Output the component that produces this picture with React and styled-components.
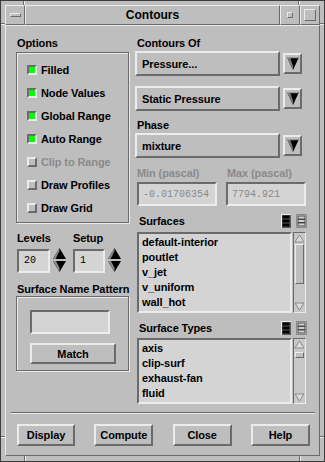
import React from 'react';
import styled, { createGlobalStyle } from 'styled-components';

const C = {
  bg: '#bebebe',
  light: '#ececec',
  dark: '#6b6b6b',
  field: '#d4d4d4',
  grey: '#8a8a8a',
};

const raised = (w = 1) =>
  `border:${w}px solid; border-color:${C.light} ${C.dark} ${C.dark} ${C.light};`;
const sunken = (w = 1) =>
  `border:${w}px solid; border-color:${C.dark} ${C.light} ${C.light} ${C.dark};`;

const Global = createGlobalStyle`
  html, body { margin: 0; padding: 0; background: ${C.bg}; }
  body { font-family: "Liberation Sans", Arial, Helvetica, sans-serif; }
  * { box-sizing: border-box; }
`;

const Window = styled.div`
  position: relative;
  width: 325px;
  height: 462px;
  background: ${C.bg};
  border: 1px solid #3c3c3c;
  padding: 4px 4px 5px 4px;
  display: flex;
  flex-direction: column;
  font-family: "Liberation Sans", Arial, Helvetica, sans-serif;
  font-weight: bold;
  font-size: 11px;
  color: #000;
  letter-spacing: -0.1px;
`;

const Tick = styled.span`
  position: absolute;
  left: ${(p) => p.$x}px;
  top: ${(p) => p.$y}px;
  width: ${(p) => p.$w}px;
  height: ${(p) => p.$h}px;
  background: ${C.light};
  box-shadow: ${(p) => (p.$w === 1 ? `-1px 0 0 ${C.dark}` : `0 -1px 0 ${C.dark}`)};
`;

const TitleBar = styled.div`
  display: flex;
  height: 20px;
  flex: none;
`;

const TitleCell = styled.div`
  ${raised(1)}
  width: ${(p) => (p.$w ? `${p.$w}px` : 'auto')};
  flex: ${(p) => (p.$w ? 'none' : '1')};
  display: flex;
  align-items: center;
  justify-content: center;
`;

const TitleText = styled.span`
  font-size: 12px;
  font-weight: bold;
  letter-spacing: 0;
`;

const MenuBar = styled.span`
  width: 11px;
  height: 4px;
  ${raised(1)}
  background: ${C.bg};
`;

const MinBox = styled.span`
  width: 6px;
  height: 6px;
  ${raised(1)}
  background: ${C.bg};
`;

const MaxBox = styled.span`
  width: 12px;
  height: 12px;
  ${raised(1)}
  background: ${C.bg};
`;

const Body = styled.div`
  flex: 1;
  ${raised(1)}
  display: flex;
  flex-direction: column;
  padding-top: 10px;
`;

const Columns = styled.div`
  display: flex;
  gap: 6px;
  padding-left: 10px;
`;

const LeftCol = styled.div`
  width: 113px;
  display: flex;
  flex-direction: column;
`;

const RightCol = styled.div`
  width: 171px;
  display: flex;
  flex-direction: column;
`;

const Label = styled.div`
  height: 14px;
  line-height: 14px;
  white-space: nowrap;
  margin-top: ${(p) => p.$mt || 0}px;
  padding-left: ${(p) => (p.$pl === undefined ? 1 : p.$pl)}px;
  color: ${(p) => (p.$disabled ? C.grey : '#000')};
`;

const GroupBox = styled.div`
  border: 1px solid ${C.dark};
  box-shadow: inset 1px 1px 0 ${C.light}, 1px 1px 0 ${C.light};
  margin-top: ${(p) => p.$mt || 0}px;
  height: ${(p) => p.$h}px;
  width: 113px;
  display: flex;
  flex-direction: column;
`;

const OptionsBox = styled(GroupBox)`
  padding: 5px 0 3px 10px;
`;

const CheckRow = styled.div`
  height: 23px;
  display: flex;
  align-items: center;
  gap: 4px;
`;

const Indicator = styled.span`
  width: 10px;
  height: 10px;
  flex: none;
  ${(p) => (p.$on ? sunken(2) : raised(2))}
  background: ${(p) => (p.$on ? '#00ff00' : C.bg)};
`;

const CheckText = styled.span`
  color: ${(p) => (p.$disabled ? C.grey : '#000')};
  white-space: nowrap;
`;

const SpinRow = styled.div`
  display: flex;
  gap: 7px;
  margin-top: 8px;
`;

const SpinGroup = styled.div`
  display: flex;
  flex-direction: column;
  margin-left: ${(p) => p.$ml || 0}px;
`;

const SpinLine = styled.div`
  display: flex;
  align-items: center;
  gap: 3px;
  margin-top: 3px;
`;

const Field = styled.div`
  ${sunken(2)}
  background: ${C.field};
  width: ${(p) => p.$w}px;
  height: 24px;
  display: flex;
  align-items: center;
  padding-left: ${(p) => p.$pl || 4}px;
  font-family: "Liberation Mono", "Courier New", monospace;
  font-weight: normal;
  font-size: 10px;
  letter-spacing: 0;
  color: ${(p) => (p.$disabled ? C.grey : '#000')};
`;

const PatternBox = styled(GroupBox)`
  padding: 13px 0 0 13px;
  gap: 9px;
`;

const PushButton = styled.button`
  ${raised(2)}
  background: ${C.bg};
  width: ${(p) => p.$w}px;
  height: ${(p) => p.$h}px;
  padding: 0;
  font-family: inherit;
  font-weight: bold;
  font-size: 11px;
  color: #000;
  letter-spacing: -0.1px;
`;

const DropRow = styled.div`
  display: flex;
  align-items: center;
  gap: 3px;
  margin-top: ${(p) => p.$mt || 0}px;
`;

const Dropdown = styled.div`
  ${raised(2)}
  width: 145px;
  height: 25px;
  display: flex;
  align-items: center;
  padding-left: 5px;
`;

const ArrowButton = styled.div`
  ${raised(2)}
  width: 19px;
  height: 21px;
  display: flex;
  align-items: center;
  justify-content: center;
`;

const MinMaxRow = styled.div`
  display: flex;
  gap: 9px;
  margin-left: 2px;
  margin-top: ${(p) => p.$mt || 0}px;
`;

const MinMaxCell = styled.div`
  width: 80px;
`;

const ListHeader = styled.div`
  display: flex;
  align-items: center;
  height: 14px;
  margin-top: ${(p) => p.$mt}px;
  padding-left: 4px;
`;

const HeaderLabel = styled.span`
  flex: 1;
`;

const HeaderIcons = styled.span`
  display: flex;
  gap: 5px;
  margin-right: -1px;
`;

const ListWrap = styled.div`
  display: flex;
  margin-left: 2px;
  margin-top: ${(p) => p.$mt}px;
  height: ${(p) => p.$h}px;
`;

const ListBox = styled.div`
  ${sunken(2)}
  background: ${C.field};
  width: 156px;
  padding: ${(p) => p.$pt}px 0 0 3px;
  overflow: hidden;
`;

const ListItem = styled.div`
  height: 15px;
  line-height: 15px;
  white-space: nowrap;
`;

const ScrollBar = styled.div`
  ${sunken(1)}
  background: #c8c8c8;
  width: 13px;
  margin-left: 1px;
  display: flex;
  flex-direction: column;
  align-items: center;
  padding: 1px 0;
`;

const Track = styled.div`
  flex: 1;
  width: 11px;
  display: flex;
  flex-direction: column;
  align-items: center;
`;

const Thumb = styled.div`
  ${raised(1)}
  background: ${C.bg};
  width: 9px;
  margin-top: ${(p) => p.$top}px;
  height: ${(p) => p.$h}px;
`;

const Separator = styled.div`
  margin: 8px 4px 0 5px;
  border-top: 1px solid ${C.dark};
  border-bottom: 1px solid ${C.light};
`;

const ButtonRow = styled.div`
  display: flex;
  justify-content: space-between;
  padding: 0 9px 0 11px;
  margin-top: 10px;
`;

const DownTriangle = () => (
  <svg width="12" height="13" viewBox="0 0 12 13">
    <polygon points="0,0 12,0 6,13" fill="#000" />
    <polygon points="0,0 3,0 6,9 6,13" fill="#7a7a7a" />
    <polygon points="0,0 12,0 11.4,1.3 0.6,1.3" fill="#9a9a9a" />
  </svg>
);

const SpinArrows = () => (
  <svg width="13" height="25" viewBox="0 0 13 25">
    <polygon points="6.5,0 13,11 0,11" fill="#000" />
    <polygon points="6.5,0 6.5,3 2.5,11 0,11" fill="#8a8a8a" />
    <polygon points="0,13 13,13 6.5,24" fill="#000" />
    <polygon points="0,13 3,13 6.5,20 6.5,24" fill="#8a8a8a" />
  </svg>
);

const ScrollArrow = ({ down }) => (
  <svg width="11" height="9" viewBox="0 0 11 9">
    {down ? (
      <polygon points="1,1 10,1 5.5,8" fill="#dcdcdc" stroke="#8a8a8a" strokeWidth="1" />
    ) : (
      <polygon points="5.5,1 10,8 1,8" fill="#dcdcdc" stroke="#8a8a8a" strokeWidth="1" />
    )}
  </svg>
);

const SelectAllIcon = () => (
  <svg width="10" height="14" viewBox="0 0 10 14">
    <rect x="0" y="0" width="10" height="14" fill="#5a5a5a" />
    <rect x="0" y="0" width="10" height="1" fill="#ececec" />
    <rect x="0" y="0" width="1" height="14" fill="#ececec" />
    <rect x="1.5" y="1.5" width="7" height="3" fill="#000" />
    <rect x="1.5" y="5.5" width="7" height="3" fill="#000" />
    <rect x="1.5" y="9.5" width="7" height="3" fill="#000" />
  </svg>
);

const DeselectAllIcon = () => (
  <svg width="11" height="14" viewBox="0 0 11 14">
    <rect x="0.5" y="0.5" width="10" height="13" fill="#cfcfcf" stroke="#8a8a8a" />
    <rect x="2" y="2" width="7" height="3" fill="none" stroke="#404040" strokeWidth="0.9" />
    <rect x="2" y="5.5" width="7" height="3" fill="none" stroke="#404040" strokeWidth="0.9" />
    <rect x="2" y="9" width="7" height="3" fill="none" stroke="#404040" strokeWidth="0.9" />
  </svg>
);

const options = [
  { label: 'Filled', on: true },
  { label: 'Node Values', on: true },
  { label: 'Global Range', on: true },
  { label: 'Auto Range', on: true },
  { label: 'Clip to Range', on: false, disabled: true },
  { label: 'Draw Profiles', on: false },
  { label: 'Draw Grid', on: false },
];

const surfaces = ['default-interior', 'poutlet', 'v_jet', 'v_uniform', 'wall_hot'];
const surfaceTypes = ['axis', 'clip-surf', 'exhaust-fan', 'fluid'];

const ticks = [
  { x: 23, y: 0, w: 1, h: 4 },
  { x: 298, y: 0, w: 1, h: 4 },
  { x: 24, y: 455, w: 1, h: 5 },
  { x: 299, y: 455, w: 1, h: 5 },
  { x: 0, y: 23, w: 4, h: 1 },
  { x: 0, y: 436, w: 4, h: 1 },
  { x: 319, y: 23, w: 4, h: 1 },
  { x: 319, y: 436, w: 4, h: 1 },
];

function OptionMenu({ text, mt }) {
  return (
    <DropRow $mt={mt}>
      <Dropdown>{text}</Dropdown>
      <ArrowButton>
        <DownTriangle />
      </ArrowButton>
    </DropRow>
  );
}

function ScrolledList({ items, mt, h, pt, thumbTop, thumbH }) {
  return (
    <ListWrap $mt={mt} $h={h}>
      <ListBox $pt={pt}>
        {items.map((it) => (
          <ListItem key={it}>{it}</ListItem>
        ))}
      </ListBox>
      <ScrollBar>
        <ScrollArrow />
        <Track>
          <Thumb $top={thumbTop} $h={thumbH} />
        </Track>
        <ScrollArrow down />
      </ScrollBar>
    </ListWrap>
  );
}

export default function App() {
  return (
    <>
      <Global />
      <Window>
        {ticks.map((t, i) => (
          <Tick key={i} $x={t.x} $y={t.y} $w={t.w} $h={t.h} />
        ))}
        <TitleBar>
          <TitleCell $w={20}>
            <MenuBar />
          </TitleCell>
          <TitleCell>
            <TitleText>Contours</TitleText>
          </TitleCell>
          <TitleCell $w={20}>
            <MinBox />
          </TitleCell>
          <TitleCell $w={20}>
            <MaxBox />
          </TitleCell>
        </TitleBar>
        <Body>
          <Columns>
            <LeftCol>
              <Label>Options</Label>
              <OptionsBox $mt={2} $h={171}>
                {options.map((o) => (
                  <CheckRow key={o.label}>
                    <Indicator $on={o.on} />
                    <CheckText $disabled={o.disabled}>{o.label}</CheckText>
                  </CheckRow>
                ))}
              </OptionsBox>
              <SpinRow>
                <SpinGroup $ml={1}>
                  <Label $pl={0}>Levels</Label>
                  <SpinLine>
                    <Field $w={33} $pl={5}>20</Field>
                    <SpinArrows />
                  </SpinLine>
                </SpinGroup>
                <SpinGroup>
                  <Label $pl={0}>Setup</Label>
                  <SpinLine>
                    <Field $w={32} $pl={5}>1</Field>
                    <SpinArrows />
                  </SpinLine>
                </SpinGroup>
              </SpinRow>
              <Label $mt={9}>Surface Name Pattern</Label>
              <PatternBox $h={75}>
                <Field $w={80} />
                <PushButton $w={86} $h={21}>Match</PushButton>
              </PatternBox>
            </LeftCol>
            <RightCol>
              <Label $pl={2}>Contours Of</Label>
              <OptionMenu text="Pressure..." mt={1} />
              <OptionMenu text="Static Pressure" mt={10} />
              <Label $pl={2} $mt={7}>Phase</Label>
              <OptionMenu text="mixture" mt={1} />
              <MinMaxRow $mt={8}>
                <MinMaxCell>
                  <Label $pl={0} $disabled>Min (pascal)</Label>
                </MinMaxCell>
                <MinMaxCell>
                  <Label $disabled>Max (pascal)</Label>
                </MinMaxCell>
              </MinMaxRow>
              <MinMaxRow $mt={2}>
                <Field $w={80} $pl={4} $disabled>-0.01706354</Field>
                <Field $w={80} $pl={4} $disabled>7794.921</Field>
              </MinMaxRow>
              <ListHeader $mt={8}>
                <HeaderLabel>Surfaces</HeaderLabel>
                <HeaderIcons>
                  <SelectAllIcon />
                  <DeselectAllIcon />
                </HeaderIcons>
              </ListHeader>
              <ScrolledList items={surfaces} mt={4} h={81} pt={1} thumbTop={1} thumbH={40} />
              <ListHeader $mt={8}>
                <HeaderLabel>Surface Types</HeaderLabel>
                <HeaderIcons>
                  <SelectAllIcon />
                  <DeselectAllIcon />
                </HeaderIcons>
              </ListHeader>
              <ScrolledList items={surfaceTypes} mt={3} h={66} pt={1} thumbTop={3} thumbH={6} />
            </RightCol>
          </Columns>
          <Separator />
          <ButtonRow>
            <PushButton $w={58} $h={22}>Display</PushButton>
            <PushButton $w={59} $h={22}>Compute</PushButton>
            <PushButton $w={59} $h={22}>Close</PushButton>
            <PushButton $w={59} $h={22}>Help</PushButton>
          </ButtonRow>
        </Body>
      </Window>
    </>
  );
}
